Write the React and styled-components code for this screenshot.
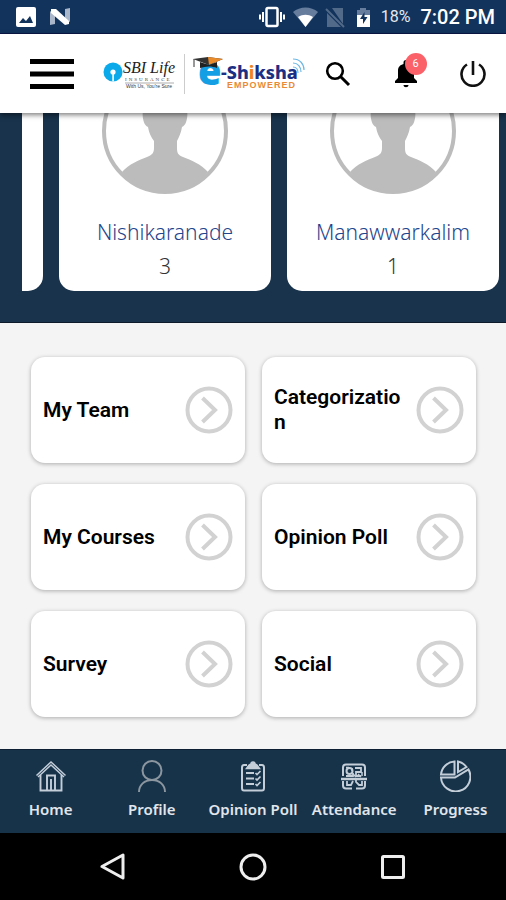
import React from 'react'
import styled, { createGlobalStyle } from 'styled-components'

const people = [
  { name: 'Nishikaranade', score: 3 },
  { name: 'Manawwarkalim', score: 1 },
]

const tiles = ['My Team', 'Categorization', 'My Courses', 'Opinion Poll', 'Survey', 'Social']

const tabs = [
  { label: 'Home', Icon: HomeIcon },
  { label: 'Profile', Icon: ProfileIcon, dim: true },
  { label: 'Opinion Poll', Icon: PollIcon },
  { label: 'Attendance', Icon: AttendanceIcon },
  { label: 'Progress', Icon: ProgressIcon },
]

function HomeIcon() {
  return (
    <svg width="32" height="32" viewBox="0 0 32 32" fill="none" stroke="currentColor" strokeWidth="2">
      <path d="M1.500 15.500 16 2l14.500 13.500M3 17 16 5l13 12" strokeWidth="1.500" />
      <path d="M5.500 15v15.500h21V15M12 30V15.500h8V30M16 19v11" strokeWidth="1.900" />
    </svg>
  )
}

function ProfileIcon() {
  return (
    <svg width="32" height="32" viewBox="0 0 32 32" fill="none" stroke="currentColor" strokeWidth="2">
      <circle cx="16" cy="10.500" r="9.500" />
      <path d="M3 32c0-7 5.500-12 13-12s13 5 13 12" />
    </svg>
  )
}

function PollIcon() {
  return (
    <svg width="32" height="32" viewBox="0 0 32 32" fill="none" stroke="currentColor" strokeWidth="2">
      <path d="M10 5H7C5.500 5 5 6 5 7.500V28c0 1.500.5 2.500 2 2.500h18c1.500 0 2-1 2-2.500V7.500C27 6 26.500 5 25 5h-3" />
      <path d="M9.500 8.500 12 5l2-1a2 2 0 0 1 4 0l2 1 2.500 3.500z" fill="currentColor" strokeWidth="1.500" />
      <path d="M9 13h8M9 18.500h8M9 24h8" strokeWidth="2" />
      <path d="m18.500 13 1.500 1.500 3.500-3.500M18.500 18.500l1.500 1.500 3.500-3.500M18.500 24l1.500 1.500 3.500-3.500" strokeWidth="1.700" />
    </svg>
  )
}

function AttendanceIcon() {
  return (
    <svg width="32" height="32" viewBox="0 0 32 32" fill="none" stroke="currentColor" strokeWidth="2">
      <path d="M15 4.500H8C6 4.500 5 5.500 5 7.500V16M15 4.500h9c2 0 3 1 3 3V16M5 21v4.500c0 2 1 3 3 3h6M27 21v4.500c0 2-1 3-3 3h-6" />
      <path d="M3 19h26" strokeWidth="2.500" />
      <circle cx="11.500" cy="11" r="3" />
      <path d="M17 8h6v4h-5v4h5M8 16h7v-3M9 21v4h4l2-4M18 20v2l3 3h3v-4" strokeWidth="1.800" />
      <path d="M8 7.500h3M24 12v4M14 8v3M15 14l3 3M20 14l3 3" strokeWidth="1.500" />
    </svg>
  )
}

function ProgressIcon() {
  return (
    <svg width="32" height="32" viewBox="0 0 32 32" fill="none" stroke="currentColor" strokeWidth="2">
      <path d="M15.500 1.500A14.500 14.500 0 0 0 2 14.500h13.500zM19 1.500v10.500l8.500-5A14.500 14.500 0 0 0 19 1.500z" />
      <path d="M2 17.500h14L29.500 9.500A14.700 14.700 0 1 1 2 17.500z" />
    </svg>
  )
}

function Avatar() {
  return (
    <svg width="126" height="126" viewBox="0 0 126 126">
      <circle cx="63" cy="63" r="61" fill="#fff" stroke="#bcbcbc" strokeWidth="4" />
      <path
        fill="#bcbcbc"
        d="M20 104c7-8 17-12 25-15 5-2 7-4 7-9v-7c-3-4-5-8-6-14-5-2-6-12-5-16-3-18 6-27 22-27s25 9 22 27c1 4 0 14-5 16-1 6-3 10-5 14v7c0 5 1 7 6 9 8 3 18 7 25 15q-18 20-43 20t-43-20z"
      />
    </svg>
  )
}

function SbiLogo() {
  return (
    <svg width="73" height="32" viewBox="0 0 73 32" role="img" aria-label="SBI Life Insurance">
      <circle cx="10" cy="14" r="9.500" fill="#0aa9ea" />
      <circle cx="10" cy="14" r="2.600" fill="#fff" />
      <path d="M9.300 14h1.600v9.500H9.300z" fill="#fff" />
      <text x="20" y="15" fontFamily="'Liberation Serif', serif" fontStyle="italic" fontSize="16" fill="#222">SBI Life</text>
      <text x="22" y="23" fontFamily="'Liberation Serif', serif" fontSize="5" letterSpacing="2" fill="#444">INSURANCE</text>
      <path d="M22 25h49" stroke="#777" strokeWidth=".6" />
      <text x="23" y="30" fontFamily="'Liberation Sans', sans-serif" fontSize="5" fill="#333">With Us, You're Sure</text>
    </svg>
  )
}

function ShikshaLogo() {
  return (
    <svg width="114" height="36" viewBox="0 0 114 36" role="img" aria-label="e-Shiksha Empowered">
      <text x="5" y="29" fontFamily="'Open Sans', sans-serif" fontWeight="800" fontSize="38" fill="#149fe4">e</text>
      <path d="M0 3 15 1l15 2-14 6z" fill="#333" />
      <path d="M15 1l15 2-14 6z" fill="#e98a2b" />
      <path d="M7 6v6c6-2 12-2 17 0V6l-8 3z" fill="#222" />
      <path d="M1 3v8" stroke="#333" />
      <text x="28" y="23" fontFamily="'Noto Sans', sans-serif" fontWeight="800" fontSize="18" fill="#1c2f83">
        -Sh<tspan fill="#ef8420">i</tspan>ksha
      </text>
      <text x="34" y="32" fontFamily="'Liberation Sans', sans-serif" fontWeight="700" fontSize="9" letterSpacing="1" fill="#ea8a35">EMPOWERED</text>
      <path d="M100 11c3 0 5 2 5 6M100 7c5 0 8 4 8 9M100 3c7 0 11 5 11 11" fill="none" stroke="#6db8e6" strokeWidth="1.200" />
    </svg>
  )
}

function StatusIcons() {
  return (
    <svg width="112" height="24" viewBox="0 0 112 24" aria-hidden="true">
      <g fill="none" stroke="#fff" strokeWidth="2">
        <rect x="7.500" y="3" width="11" height="18" rx="1.500" strokeWidth="2.500" />
        <path d="M4 7v10M22 7v10M1 9.500v5M25 9.500v5" />
      </g>
      <path d="M34 7c7-6 18-6 25 0L46.500 22z" fill="#667d9d" />
      <path d="M39 12c5-3 10-3 15 0l-7.500 10z" fill="#fff" />
      <path d="M73 3h11v16zM68 8l14 14H68z" fill="#526a8a" />
      <path d="m67 4 18 18" stroke="#526a8a" strokeWidth="2" />
      <path d="M98 5h3V3h6v2h4v6H98z" fill="#667d9d" />
      <path d="M98 10h13v12H98z" fill="#fff" />
      <path d="m105.500 7-4.500 7h3v5l4.500-7h-3z" fill="#12335c" />
    </svg>
  )
}

function App() {
  return (
    <Page>
      <GlobalStyle />
      <StatusBar>
        <StatusGroup $gap={14}>
          <svg width="20" height="20" viewBox="0 0 20 20" aria-hidden="true">
            <rect width="20" height="20" rx="2" fill="#fff" />
            <path d="m3 16 4-5 3 3 4-5 3 7z" fill="#12335c" />
          </svg>
          <svg width="20" height="18" viewBox="0 0 20 18" aria-hidden="true">
            <path d="M0 3 5 7v9L0 17zM15 1l5-1v14l-5-3z" fill="#a9b5c8" />
            <path d="M1 1h5l13 12v3l-4 1L1 5z" fill="#fff" />
          </svg>
        </StatusGroup>
        <StatusGroup $gap={10}>
          <StatusIcons />
          <Battery>18%</Battery>
          <Clock>7:02 PM</Clock>
        </StatusGroup>
      </StatusBar>

      <Header>
        <IconButton aria-label="Menu">
          <svg width="44" height="30" viewBox="0 0 44 30">
            <path d="M0 2.500h44M0 15h44M0 27.500h44" stroke="#000" strokeWidth="5" />
          </svg>
        </IconButton>
        <Logos>
          <SbiLogo />
          <ShikshaLogo />
        </Logos>
        <Actions>
          <IconButton aria-label="Search">
            <svg width="26" height="26" viewBox="0 0 26 26" fill="none" stroke="#000">
              <circle cx="10" cy="10" r="7.800" strokeWidth="2.600" />
              <path d="m15.500 15.500 8.500 8.500" strokeWidth="3" />
            </svg>
          </IconButton>
          <IconButton aria-label="Notifications">
            <svg width="24" height="28" viewBox="0 0 24 28">
              <path d="M1 23v-2l3-3v-7c0-4 2-6 5.500-7V2.500a2.500 2.500 0 0 1 5 0V4c3.500 1 5.500 3 5.500 7v7l3 3v2zM9.500 25h5c0 3-5 3-5 0z" />
            </svg>
            <Badge>6</Badge>
          </IconButton>
          <IconButton aria-label="Log out">
            <svg width="26" height="26" viewBox="0 0 26 26" fill="none" stroke="#111" strokeWidth="2.600">
              <path d="M13 0v14M7 3.500a11.500 11.500 0 1 0 12 0" />
            </svg>
          </IconButton>
        </Actions>
      </Header>

      <Main>
        <Leaders>
          <Carousel>
            <PersonCard />
            {people.map((person) => (
              <PersonCard key={person.name}>
                <Avatar />
                <PersonName>{person.name}</PersonName>
                <Score>{person.score}</Score>
              </PersonCard>
            ))}
          </Carousel>
        </Leaders>
        <Tiles>
          {tiles.map((tile) => (
            <Tile key={tile}>
              <TileLabel>{tile}</TileLabel>
              <svg width="48" height="48" viewBox="0 0 48 48" fill="none" stroke="#d2d2d2" strokeWidth="4">
                <circle cx="24" cy="24" r="21.500" />
                <path d="m17.500 12 12.500 12-12.500 12" />
              </svg>
            </Tile>
          ))}
        </Tiles>
      </Main>

      <TabBar>
        {tabs.map(({ label, Icon, dim }) => (
          <Tab href="#" key={label} $dim={dim}>
            <Icon />
            <span>{label}</span>
          </Tab>
        ))}
      </TabBar>

      <SystemNav>
        <IconButton aria-label="Back">
          <svg width="28" height="28" viewBox="0 0 28 28" fill="none" stroke="#eee" strokeWidth="3">
            <path d="M24 2v23L3 13.500z" strokeLinejoin="round" />
          </svg>
        </IconButton>
        <IconButton aria-label="Home screen">
          <svg width="28" height="28" viewBox="0 0 28 28" fill="none" stroke="#eee" strokeWidth="3">
            <circle cx="14" cy="14" r="12" />
          </svg>
        </IconButton>
        <IconButton aria-label="Recent apps">
          <svg width="28" height="28" viewBox="0 0 28 28" fill="none" stroke="#eee" strokeWidth="3">
            <rect x="3.500" y="3.500" width="21" height="21" rx="1" />
          </svg>
        </IconButton>
      </SystemNav>
    </Page>
  )
}

const GlobalStyle = createGlobalStyle`
  *{
    box-sizing: border-box;
  }
  body{
    margin: 0;
    font-family: Roboto, sans-serif;
    color: #000;
  }
  svg{
    display: block;
    flex-shrink: 0;
  }
  button{
    font: inherit;
    color: inherit;
    border: 0;
    padding: 0;
    background: none;
    cursor: pointer;
  }
`;

const Page = styled.div`
  height: 100vh;
  display: flex;
  flex-direction: column;
  background: #f4f4f4;
`;

const StatusBar = styled.div`
  display: flex;
  align-items: center;
  justify-content: space-between;
  height: 34px;
  flex-shrink: 0;
  padding: 0 11px 0 16px;
  background: #12335c;
  border-bottom: 1px solid #0b1648;
  color: #fff;
`;

const StatusGroup = styled.div`
  display: flex;
  align-items: center;
  gap: ${(props) => props.$gap}px;
`;

const Battery = styled.span`
  font-size: 16px;
  color: #e3e8ef;
`;

const Clock = styled.span`
  font-size: 20px;
  font-weight: 500;
`;

const Header = styled.header`
  position: relative;
  z-index: 1;
  display: flex;
  align-items: center;
  height: 79px;
  flex-shrink: 0;
  padding: 0 20px 0 30px;
  background: #fff;
  box-shadow: 0 2px 5px rgba(0, 0, 0, 0.5);
`;

const IconButton = styled.button`
  position: relative;
  display: flex;
  align-items: center;
  justify-content: center;
`;

const Logos = styled.div`
  display: flex;
  align-items: center;
  margin-left: 29px;
  > svg:first-child{
    box-sizing: content-box;
    padding: 4px 8px 4px 0;
    border-right: 1px solid #ccc;
  }
  > svg:last-child{
    margin-left: 8px;
  }
`;

const Actions = styled.div`
  flex: 1;
  display: flex;
  align-items: center;
  justify-content: space-between;
  margin-left: 18px;
`;

const Badge = styled.span`
  position: absolute;
  top: -7px;
  right: -9px;
  width: 22px;
  height: 22px;
  border-radius: 50%;
  background: #fa6168;
  color: #fff;
  font-size: 11px;
  line-height: 22px;
  text-align: center;
`;

const Main = styled.main`
  flex: 1;
  min-height: 0;
  display: flex;
  flex-direction: column;
  justify-content: flex-end;
  overflow: hidden;
`;

const Leaders = styled.section`
  flex-shrink: 0;
  padding: 32px 0 31px 22px;
  background: #18334b;
  border-bottom: 1px solid #0c1a2a;
`;

const Carousel = styled.div`
  display: flex;
  justify-content: flex-end;
  gap: 16px;
  padding-right: 7px;
  overflow: hidden;
`;

const PersonCard = styled.article`
  flex: 0 0 212px;
  display: flex;
  flex-direction: column;
  align-items: center;
  padding: 20px 0 9px;
  border-radius: 15px;
  background: #fff;
  font-family: 'Noto Sans', sans-serif;
  font-size: 21px;
  font-weight: 300;
`;

const PersonName = styled.div`
  margin-top: 20px;
  line-height: 36px;
  color: #1f458c;
`;

const Score = styled.div`
  line-height: 32px;
  color: #333;
`;

const Tiles = styled.section`
  flex-shrink: 0;
  display: grid;
  grid-template-columns: 1fr 1fr;
  gap: 21px 17px;
  padding: 34px 30px 32px 31px;
`;

const Tile = styled.button`
  display: flex;
  align-items: center;
  justify-content: space-between;
  height: 106px;
  padding: 0 12px;
  border-radius: 14px;
  background: #fff;
  box-shadow: 0 1px 4px rgba(0, 0, 0, 0.3);
  text-align: left;
`;

const TileLabel = styled.span`
  width: 130px;
  font-size: 21px;
  line-height: 25px;
  font-weight: 600;
  overflow-wrap: anywhere;
`;

const TabBar = styled.nav`
  display: grid;
  grid-template-columns: repeat(5, 1fr);
  flex-shrink: 0;
  height: 84px;
  padding-top: 10px;
  background: #17334a;
  border-top: 1px solid #0c1f33;
`;

const Tab = styled.a`
  display: flex;
  flex-direction: column;
  align-items: center;
  gap: 5px;
  font-family: 'Noto Sans', sans-serif;
  font-size: 15px;
  line-height: 24px;
  font-weight: 600;
  white-space: nowrap;
  color: #e0e6ec;
  text-decoration: none;
  svg{
    color: ${(props) => (props.$dim ? '#8b969f' : '#c3ced9')};
  }
`;

const SystemNav = styled.div`
  display: flex;
  align-items: center;
  justify-content: center;
  gap: 112px;
  flex-shrink: 0;
  height: 67px;
  background: #000;
`;

export default App
